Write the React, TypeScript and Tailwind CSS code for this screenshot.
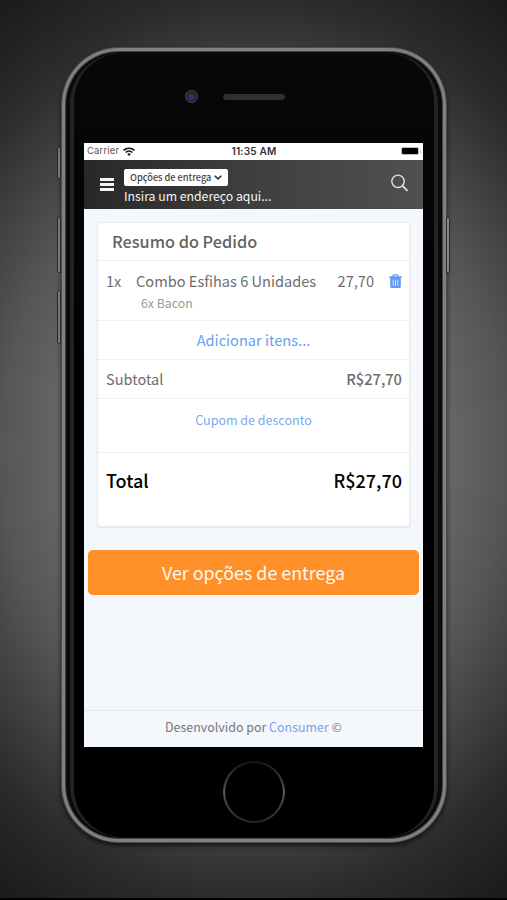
import React from "react";

function Wifi() {
  return (
    <svg className="ml-[4px] h-[9px] w-3" viewBox="0 0 12 9" fill="none" stroke="#111" strokeWidth="1.7">
      <path d="M0.6 3.4a7.8 7.8 0 0 1 10.8 0" />
      <path d="M2.7 5.5a4.8 4.8 0 0 1 6.6 0" />
      <path d="M6 9 4.2 7.1a2.6 2.6 0 0 1 3.6 0z" fill="#111" stroke="none" />
    </svg>
  );
}

function Trash() {
  return (
    <svg className="h-[15px] w-[13px]" viewBox="0 0 13 15" fill="none">
      <path d="M4 3V1.9Q4 .9 5 .9h3q1 0 1 1V3" stroke="#5f9cf0" strokeWidth="1.2" />
      <path d="M.3 2.3h12.4v1.7H.3z" fill="#5f9cf0" />
      <path d="M1.2 3.5h10.6v9.2q0 1.4-1.4 1.4H2.6q-1.4 0-1.4-1.4z" fill="#5f9cf0" />
      <path d="M4.2 5.8v6M6.5 5.8v6M8.8 5.8v6" stroke="#d3e4fc" strokeWidth="1" />
    </svg>
  );
}

function StatusBar() {
  return (
    <div className="grid h-[17px] grid-cols-3 items-center bg-white pr-[2px] pl-[3px] font-['Inter',sans-serif] text-[9.5px] text-[#555]">
      <div className="flex items-center">
        <span className="tracking-[0.15px]">Carrier</span>
        <Wifi />
      </div>
      <div className="text-center text-[10.1px] font-semibold tracking-[0.15px] text-[#333]">11:35 AM</div>
      <div className="flex items-center justify-end pb-px">
        <span className="h-2 w-[18px] rounded-[2px] border border-[#bbb] bg-black" />
        <span className="ml-px h-[3px] w-px bg-[#bbb]" />
      </div>
    </div>
  );
}

function Header() {
  return (
    <div className="flex h-[49px] items-start bg-linear-to-r from-[#282828] via-[#3f3f3f] to-[#505050] pr-[14px] pl-4">
      <div className="mt-[18px] flex w-[14px] flex-col gap-[2px]">
        <span className="h-[3px] bg-[#f4f4f4]" />
        <span className="h-[3px] bg-[#f4f4f4]" />
        <span className="h-[3px] bg-[#f4f4f4]" />
      </div>
      <div className="ml-[10px] flex flex-1 flex-col items-start pt-[9px]">
        <div className="flex h-[17px] w-[104px] items-center justify-between rounded-[2px] bg-white pr-[6px] pl-[6px]">
          <span className="text-[9.2px] leading-none font-medium whitespace-nowrap text-[#444]">Opções de entrega</span>
          <svg className="h-[5px] w-2" viewBox="0 0 8 5" fill="none" stroke="#333" strokeWidth="1.6">
            <path d="M.7.7 4 3.9 7.3.7" />
          </svg>
        </div>
        <div className="mt-[3px] text-[12.25px] leading-[15px] font-normal whitespace-nowrap text-[#f6f6f6]">Insira um endereço aqui...</div>
      </div>
      <svg className="mt-[14px] h-[18px] w-[18px]" viewBox="0 0 18 18" fill="none" stroke="#e0e0e0" strokeWidth="1.4">
        <circle cx="7" cy="7.3" r="6.2" />
        <path d="m11.5 11.8 5 5" strokeWidth="1.8" />
      </svg>
    </div>
  );
}

function OrderCard() {
  return (
    <div className="mx-[13px] mt-[13px] h-[305px] rounded-[3px] border border-[#e7eaee] bg-white text-[#6d6d6d] shadow-[0_1px_2px_#e2e6ea]">
      <div className="h-[38px] border-b border-[#f0f0f1] pl-[14px] text-[16.3px] leading-[37px] font-medium text-[#626262]">
        Resumo do Pedido
      </div>
      <div className="h-[60px] border-b border-[#f0f0f1] pt-[10px] pr-[7px] pl-2">
        <div className="flex h-5 items-center text-[14.6px] leading-5">
          <span className="w-[30px]">1x</span>
          <span className="flex-1 whitespace-nowrap">Combo Esfihas 6 Unidades</span>
          <span className="mr-[15px]">27,70</span>
          <Trash />
        </div>
        <div className="mt-[3px] pl-[35px] text-[12.3px] leading-[18px] text-[#999]">6x Bacon</div>
      </div>
      <div className="h-[39px] border-b border-[#f0f0f1] text-center text-[14.6px] leading-[38px] text-[#689fee]">
        Adicionar itens...
      </div>
      <div className="flex h-[39px] items-center justify-between border-b border-[#f0f0f1] pr-[7px] pl-2 text-[14.5px]">
        <span>Subtotal</span>
        <span className="text-[14.7px] font-medium">R$27,70</span>
      </div>
      <div className="h-[54px] border-b border-[#f0f0f1] text-center text-[12.5px] leading-[41px] text-[#7aabee]">
        Cupom de desconto
      </div>
      <div className="flex h-[54px] items-center justify-between pr-[7px] pl-2 text-[18px] font-medium text-black">
        <span>Total</span>
        <span>R$27,70</span>
      </div>
    </div>
  );
}

export default function App() {
  return (
    <div className="relative flex h-[900px] w-[507px] flex-col items-center overflow-hidden border-b-2 border-black bg-[radial-gradient(420px_520px_at_50%_50%,#6e6e6e_40%,#565656_60%,#2b2b2b_87%,#1a1a1a_106%)] pt-[47px] font-['Noto_Sans_CJK_SC',sans-serif]">
      <div className="absolute top-[147px] left-[57px] h-[32px] w-[4px] rounded-l-[2px] border border-[#282828] bg-[#777]" />
      <div className="absolute top-[217px] left-[57px] h-[56px] w-[4px] rounded-l-[2px] border border-[#282828] bg-[#777]" />
      <div className="absolute top-[290px] left-[57px] h-[54px] w-[4px] rounded-l-[2px] border border-[#282828] bg-[#777]" />
      <div className="absolute top-[217px] left-[446px] h-[56px] w-[4px] rounded-r-[2px] border border-[#282828] bg-[#888]" />
      <div className="h-[796px] w-[386px] rounded-[58px] bg-[#4c4c4c] p-px shadow-[0_3px_5px_#0009]">
        <div className="h-full rounded-[57px] bg-[#808082] p-[3px]">
          <div className="h-full rounded-[54px] bg-[#424244] p-px">
            <div className="h-full rounded-[53px] bg-[#0b0b0c] px-[4px] py-px">
              <div className="h-full rounded-[51px] bg-[#232325] px-[4px]">
                <div className="flex h-full flex-col items-center rounded-[49px] bg-linear-to-b from-[#080808] to-black">
                  <div className="flex h-[90px] w-full items-start pt-[38px] pl-[112px]">
                    <div className="-ml-px -mt-px flex h-[13px] w-[13px] items-center justify-center rounded-full border border-[#484848] bg-[#22252c]">
                      <div className="h-[6px] w-[6px] rounded-full bg-[#26366e]" />
                    </div>
                    <div className="mt-[3px] ml-[25px] h-[6px] w-[62px] rounded-full bg-[#303030]" />
                  </div>
                  <div className="flex h-[604px] w-[339px] flex-col overflow-hidden bg-[#f4f7fb]">
                    <StatusBar />
                    <Header />
                    <OrderCard />
                    <div className="mx-1 mt-[23px] h-[45px] rounded-[5px] bg-[#ff9029] text-center text-[17.85px] leading-[45px] text-[#fff8ed]">
                      Ver opções de entrega
                    </div>
                    <div className="mt-auto h-[37px] border-t border-[#e4e9ed] text-center text-[12.45px] leading-[33px] text-[#777]">
                      Desenvolvido por <span className="text-[#72a3ed]">Consumer</span> ©
                    </div>
                  </div>
                  <div className="mt-[14px] h-[62px] w-[62px] rounded-full bg-linear-to-b from-[#151515] via-[#5c5c5c] to-[#222] p-[2px]">
                    <div className="h-full rounded-full bg-black" />
                  </div>
                </div>
              </div>
            </div>
          </div>
        </div>
      </div>
    </div>
  );
}
